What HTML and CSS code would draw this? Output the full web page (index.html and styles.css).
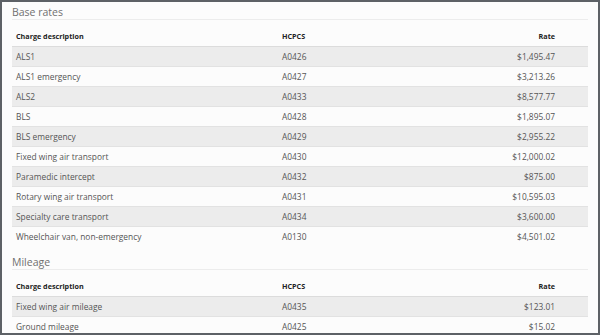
FILE: index.html
```html
<!DOCTYPE html>
<html>
<head>
<meta charset="utf-8">
<link rel="stylesheet" href="styles.css">
</head>
<body>
<div class="frame">
  <h2 class="section-title">Base rates</h2>
  <table class="rates">
    <thead>
      <tr><th class="c-desc">Charge description</th><th class="c-code">HCPCS</th><th class="c-rate">Rate</th></tr>
    </thead>
    <tbody>
      <tr><td>ALS1</td><td>A0426</td><td class="c-rate">$1,495.47</td></tr>
      <tr><td>ALS1 emergency</td><td>A0427</td><td class="c-rate">$3,213.26</td></tr>
      <tr><td>ALS2</td><td>A0433</td><td class="c-rate">$8,577.77</td></tr>
      <tr><td>BLS</td><td>A0428</td><td class="c-rate">$1,895.07</td></tr>
      <tr><td>BLS emergency</td><td>A0429</td><td class="c-rate">$2,955.22</td></tr>
      <tr><td>Fixed wing air transport</td><td>A0430</td><td class="c-rate">$12,000.02</td></tr>
      <tr><td>Paramedic intercept</td><td>A0432</td><td class="c-rate">$875.00</td></tr>
      <tr><td>Rotary wing air transport</td><td>A0431</td><td class="c-rate">$10,595.03</td></tr>
      <tr><td>Specialty care transport</td><td>A0434</td><td class="c-rate">$3,600.00</td></tr>
      <tr><td>Wheelchair van, non-emergency</td><td>A0130</td><td class="c-rate">$4,501.02</td></tr>
    </tbody>
  </table>
  <h2 class="section-title second">Mileage</h2>
  <table class="rates">
    <thead>
      <tr><th class="c-desc">Charge description</th><th class="c-code">HCPCS</th><th class="c-rate">Rate</th></tr>
    </thead>
    <tbody>
      <tr><td>Fixed wing air mileage</td><td>A0435</td><td class="c-rate">$123.01</td></tr>
      <tr><td>Ground mileage</td><td>A0425</td><td class="c-rate">$15.02</td></tr>
    </tbody>
  </table>
</div>
</body>
</html>
```
FILE: styles.css
```css
html, body {
  margin: 0;
  padding: 0;
}
body {
  font-family: "Open Sans", "Noto Sans", sans-serif;
  background: #ffffff;
}
.frame {
  box-sizing: border-box;
  width: 600px;
  height: 335px;
  border: 2px solid #5d6166;
  background: #fcfcfc;
  padding: 0 10px;
  overflow: hidden;
}
.section-title {
  margin: 0;
  padding-top: 3px;
  height: 14px;
  font-size: 10.5px;
  font-weight: 400;
  line-height: 14px;
  color: #707070;
  border-bottom: 1px solid #ececec;
}
.section-title.second {
  margin-top: 6px;
}
.rates {
  width: 100%;
  border-collapse: collapse;
  font-size: 8.4px;
  color: #555;
}
.rates th {
  height: 26px;
  padding: 7px 4px 0;
  box-sizing: border-box;
  text-align: left;
  font-size: 7.2px;
  font-weight: 700;
  color: #222;
  border-bottom: 1px solid #dcdcdc;
}
.rates td {
  height: 20px;
  padding: 1px 4px 0;
  box-sizing: border-box;
  border-bottom: 1px solid #e2e2e2;
}
.rates tbody tr:nth-child(odd) td {
  background: #ececec;
}
.rates tbody tr:last-child td {
  border-bottom: none;
}
.c-desc {
  width: 266px;
}
.c-rate {
  text-align: right !important;
  padding-right: 33px !important;
}
```
